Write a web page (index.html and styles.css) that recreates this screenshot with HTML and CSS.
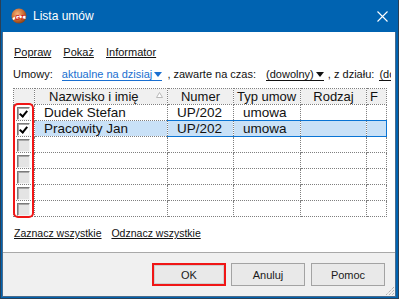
FILE: index.html
```html
<!DOCTYPE html>
<html lang="pl">
<head>
  <meta charset="UTF-8" />
  <title>Lista umów</title>
  <link rel="stylesheet" href="styles.css">
</head>
<body>

  <div class="window">
    <div class="titlebar">
      <svg class="app-icon" width="16" height="16" viewBox="0 0 16 16">
        <defs>
          <radialGradient id="ball" cx="0.4" cy="0.35" r="0.7">
            <stop offset="0" stop-color="#f6b27a"/>
            <stop offset="0.6" stop-color="#c8692e"/>
            <stop offset="1" stop-color="#7a3a16"/>
          </radialGradient>
        </defs>
        <circle cx="8" cy="8" r="7.5" fill="url(#ball)"/>
        <path d="M1.5 10 Q8 5 14.5 8 L14.5 11 Q8 8.5 2 12 Z" fill="#fff"/>
        <text x="8.5" y="12" font-family="Liberation Sans" font-size="7" font-weight="bold" font-style="italic" fill="#d21f1f" text-anchor="middle">GT</text>
      </svg>
      <span class="title">Lista umów</span>
      <svg class="close" width="11" height="11" viewBox="0 0 11 11">
        <path d="M0.5 0.5 L10.5 10.5 M10.5 0.5 L0.5 10.5" stroke="#fff" stroke-width="1.1"/>
      </svg>
    </div>

    <div class="client">
      <div class="content">
        <div class="menu">
          <a>Popraw</a>
          <a>Pokaż</a>
          <a>Informator</a>
        </div>

        <div class="filters">
          <span class="label">Umowy:</span>
          <span class="pick pick-blue">aktualne na dzisiaj<svg class="arrow" width="8" height="5" viewBox="0 0 8 5"><path d="M0 0 H8 L4 5 Z" fill="currentColor"/></svg></span>
          <span class="sep1">, zawarte na czas:</span>
          <span class="pick pick-time">(dowolny)<svg class="arrow" width="8" height="5" viewBox="0 0 8 5"><path d="M0 0 H8 L4 5 Z" fill="currentColor"/></svg></span>
          <span class="sep2">, z działu:</span>
          <span class="pick pick-dept">(dowolny)</span>
        </div>

        <div class="grid-wrap">
          <table class="grid">
            <colgroup>
              <col class="c-chk"><col class="c-name"><col class="c-num"><col class="c-type"><col class="c-kind"><col class="c-f">
            </colgroup>
            <thead>
              <tr>
                <th></th>
                <th class="th-name">Nazwisko i imię<svg class="sort" width="7" height="6" viewBox="0 0 7 6"><path d="M3.5 0.5 L6.5 5.5 H0.5 Z" fill="#fff" stroke="#b8b8b8"/></svg></th>
                <th>Numer</th>
                <th class="th-left">Typ umow</th>
                <th>Rodzaj</th>
                <th class="th-left">F</th>
              </tr>
            </thead>
            <tbody>
              <tr>
                <td class="chk"><span class="box checked"></span></td>
                <td>Dudek Stefan</td>
                <td>UP/202</td>
                <td>umowa</td>
                <td></td>
                <td></td>
              </tr>
              <tr class="selected">
                <td class="chk"><span class="box checked"></span></td>
                <td>Pracowity Jan</td>
                <td class="focus">UP/202</td>
                <td class="focus">umowa</td>
                <td class="focus"></td>
                <td class="focus focus-end"></td>
              </tr>
              <tr><td class="chk"><span class="box"></span></td><td></td><td></td><td></td><td></td><td></td></tr>
              <tr><td class="chk"><span class="box"></span></td><td></td><td></td><td></td><td></td><td></td></tr>
              <tr><td class="chk"><span class="box"></span></td><td></td><td></td><td></td><td></td><td></td></tr>
              <tr><td class="chk"><span class="box"></span></td><td></td><td></td><td></td><td></td><td></td></tr>
              <tr><td class="chk"><span class="box"></span></td><td></td><td></td><td></td><td></td><td></td></tr>
            </tbody>
          </table>
          <div class="mark-checks"></div>
        </div>

        <div class="select-links">
          <a>Zaznacz wszystkie</a>
          <a>Odznacz wszystkie</a>
        </div>
      </div>

      <div class="footer">
        <button class="btn btn-ok">OK</button>
        <button class="btn">Anuluj</button>
        <button class="btn">Pomoc</button>
        <svg class="grip" width="10" height="10" viewBox="0 0 10 10">
          <path d="M9 1 L1 9 M9 4 L4 9 M9 7 L7 9" stroke="#9a9a9a" stroke-width="1" stroke-dasharray="1 1"/>
        </svg>
      </div>
    </div>
  </div>

</body>
</html>
```

FILE: styles.css
```css
body {
  margin: 0;
  padding: 0;
  background: #1f3f66;
  font-family: 'Liberation Sans', Arial, sans-serif;
}

.window {
  width: 399px;
  height: 299px;
  box-sizing: border-box;
  background: #0063b1;
  border: 1px solid #2a3f55;
  border-top: none;
  padding: 0 2px 1px 1px;
  display: flex;
  flex-direction: column;
}

.titlebar {
  height: 32px;
  flex: none;
  display: flex;
  align-items: center;
  color: white;
}

.app-icon {
  margin-left: 9px;
}

.title {
  margin-left: 6px;
  font-size: 12px;
}

.close {
  margin-left: auto;
  margin-right: 8px;
}

.client {
  flex: 1;
  background: white;
  display: flex;
  flex-direction: column;
  border: 1px solid #4a6a8a;
  border-top: none;
}

.content {
  flex: 1;
  padding: 13px 4px 0 10px;
  font-size: 11px;
  line-height: 14px;
  color: #111;
}

.menu {
  height: 14px;
  padding-left: 1px;
  white-space: nowrap;
}

.menu a {
  text-decoration: underline;
  margin-right: 9px;
}

.filters {
  margin-top: 8px;
  height: 14px;
  white-space: nowrap;
  overflow: hidden;
}

.label {
  margin-right: 6px;
}

.pick {
  border-bottom: 1px solid currentColor;
}

.pick-blue {
  color: #1a6fd0;
}

.arrow {
  margin-left: 2px;
  vertical-align: 1px;
}

.sep1 {
  margin-left: 2px;
}

.pick-time {
  margin-left: 7px;
}

.sep2 {
  margin-left: 1px;
}

.pick-dept {
  margin-left: 2px;
}

.grid-wrap {
  position: relative;
  margin-top: 7px;
  width: 374px;
}

.grid {
  border-collapse: collapse;
  table-layout: fixed;
  width: 374px;
}

.c-chk { width: 21px; }
.c-name { width: 133px; }
.c-num { width: 66px; }
.c-type { width: 67px; }
.c-kind { width: 66px; }
.c-f { width: 20px; }

.grid th,
.grid td {
  border: 1px dotted #7f7f7f;
  padding: 0;
  height: 15px;
  overflow: hidden;
  white-space: nowrap;
}

.grid th {
  background: #f0f0f0;
  font-weight: normal;
  font-size: 13px;
  line-height: 15px;
  text-align: center;
}

.grid th.th-left {
  text-align: left;
  padding-left: 3px;
}

.grid th.th-name {
  text-align: left;
  padding-left: 14px;
}

.sort {
  margin-left: 17px;
  vertical-align: 3px;
}

.grid td {
  font-size: 13.5px;
  line-height: 15px;
  padding-left: 9px;
}

.grid td.chk {
  padding: 0 0 0 3px;
  vertical-align: top;
}

.box {
  display: block;
  width: 11px;
  height: 11px;
  margin-top: 2px;
  border-top: 1px solid #7a7a7a;
  border-left: 1px solid #7a7a7a;
  border-right: 1px solid #f4f4f4;
  border-bottom: 1px solid #f4f4f4;
  box-shadow: inset 1px 1px 0 #a8a8a8;
  background: #e4e4e4;
  position: relative;
}

.box.checked {
  background: #fff;
}

.box.checked::after {
  content: "";
  position: absolute;
  left: 3px;
  top: 1px;
  width: 3px;
  height: 6px;
  border-right: 2px solid #000;
  border-bottom: 2px solid #000;
  transform: rotate(40deg);
}

.selected td {
  background: #c9e1f7;
}

.selected td.chk {
  background: #fff;
}

.selected td.focus {
  border-top: 1px solid #0a74d4;
  border-bottom: 1px solid #0a74d4;
}

.selected td.focus-end {
  border-right: 1px solid #0a74d4;
}

.mark-checks {
  position: absolute;
  left: 0;
  top: 15px;
  width: 17px;
  height: 111px;
  border: 2px solid #f01616;
  border-radius: 5px;
}

.select-links {
  margin-top: 9px;
  padding-left: 1px;
  white-space: nowrap;
  font-size: 10.5px;
}

.select-links a {
  text-decoration: underline;
  margin-right: 7px;
}

.footer {
  flex: none;
  height: 44px;
  background: #f0f0f0;
  border-top: 1px solid #a9a9a9;
  display: flex;
  align-items: flex-start;
  justify-content: flex-end;
  padding: 10px 10px 0 0;
  box-sizing: border-box;
  gap: 6px;
  position: relative;
}

.btn {
  width: 74px;
  height: 23px;
  background: #e9e9e9;
  border: 1px solid #a3a3a3;
  font-family: 'Liberation Sans', Arial, sans-serif;
  font-size: 11px;
  font-weight: normal;
  color: #1a1a1a;
  padding: 0;
}

.btn-ok {
  border: 2px solid #f01616;
  box-shadow: inset 0 0 0 1px #cfcfcf;
  margin-right: -1px;
}

.grip {
  position: absolute;
  right: 0;
  bottom: 0;
}
```
